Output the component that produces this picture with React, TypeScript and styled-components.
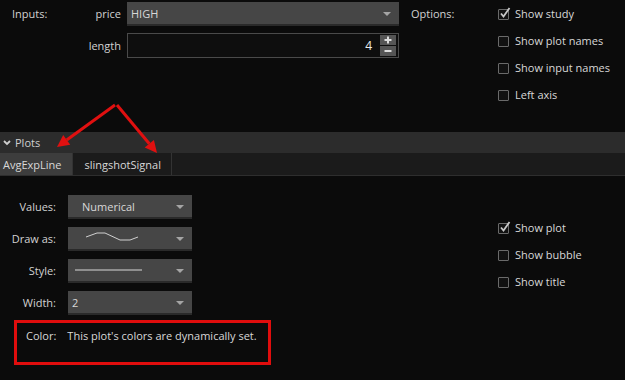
import React from 'react'
import styled, { createGlobalStyle } from 'styled-components'

const GlobalStyle = createGlobalStyle`
  html, body {
    margin: 0;
    padding: 0;
    background: #0b0b0b;
  }
  body {
    font-family: 'Open Sans', 'Liberation Sans', sans-serif;
    font-size: 11px;
    color: #d2d2d2;
  }
`

const Page = styled.div`
  position: relative;
  width: 625px;
  height: 380px;
  overflow: hidden;
  background: #0b0b0b;
`

const TopSection = styled.div`
  display: flex;
  height: 132px;
`

const InputsColumn = styled.div`
  display: grid;
  grid-template-columns: 70px 45px 272px;
  row-gap: 7px;
  padding: 2px 0 0 12px;
  align-content: start;
  align-items: center;
`

const SectionLabel = styled.div`
  color: #d2d2d2;
  height: 24px;
  line-height: 24px;
`

const FieldLabel = styled.div`
  text-align: right;
  padding-right: 6px;
  height: 24px;
  line-height: 24px;
`

const Select = styled.div<{ $width?: number }>`
  position: relative;
  display: flex;
  align-items: center;
  box-sizing: border-box;
  width: ${({ $width }) => ($width ? `${$width}px` : '100%')};
  height: 24px;
  padding: 0 22px 0 4px;
  background: #464646;
  border-bottom: 2px solid #2a2a2a;
  color: #d8d8d8;
`

const Caret = styled.span`
  position: absolute;
  right: 8px;
  top: 10px;
  width: 0;
  height: 0;
  border-left: 4px solid transparent;
  border-right: 4px solid transparent;
  border-top: 4px solid #a5a5a5;
`

const NumberInput = styled.div`
  display: flex;
  align-items: center;
  justify-content: flex-end;
  box-sizing: border-box;
  height: 25px;
  border: 1px solid #4a4a4a;
  background: #0e0e0e;
  padding-right: 2px;
  color: #ececec;
`

const NumberValue = styled.span`
  margin-right: 8px;
  font-size: 12px;
`

const Spinner = styled.div`
  display: flex;
  flex-direction: column;
  gap: 1px;
`

const SpinButton = styled.div`
  display: flex;
  align-items: center;
  justify-content: center;
  width: 16px;
  height: 10px;
  background: #555;
`

const OptionsColumn = styled.div`
  display: flex;
  padding: 2px 0 0 12px;
`

const OptionsLabel = styled(SectionLabel)`
  width: 87px;
`

const CheckList = styled.div<{ $gap: number }>`
  display: flex;
  flex-direction: column;
  gap: ${({ $gap }) => $gap}px;
`

const CheckRow = styled.div`
  display: flex;
  align-items: center;
  gap: 6px;
  height: 24px;
  line-height: 24px;
  color: #d8d8d8;
`

const Box = styled.span`
  position: relative;
  box-sizing: border-box;
  width: 11px;
  height: 11px;
  border: 1px solid #6a6a6a;
  border-radius: 1px;
  background: #111;
  margin-top: 1px;
`

const PlotsHeader = styled.div`
  display: flex;
  align-items: center;
  gap: 4px;
  height: 21px;
  padding-left: 3px;
  background: #2c2c2c;
  color: #cfcfcf;
`

const TabBar = styled.div`
  display: flex;
  height: 22px;
  background: #1b1b1b;
  border-bottom: 1px solid #2e2e2e;
`

const Tab = styled.div<{ $active?: boolean }>`
  display: flex;
  align-items: center;
  padding: ${({ $active }) => ($active ? '0 11px 0 3px' : '0 10px 0 11px')};
  background: ${({ $active }) => ($active ? '#3d3d3d' : 'transparent')};
  border-right: 1px solid #333;
  color: #d8d8d8;
  font-size: 11px;
`

const PlotBody = styled.div`
  display: flex;
  padding-top: 19px;
`

const PlotFields = styled.div`
  display: grid;
  grid-template-columns: 56px 124px;
  column-gap: 12px;
  row-gap: 8px;
  align-items: center;
  width: 498px;
  align-content: start;
`

const PlotLabel = styled.div`
  text-align: right;
  height: 24px;
  line-height: 24px;
`

const PlotChecks = styled.div`
  padding-top: 21px;
`

const ColorBox = styled.div`
  display: flex;
  gap: 11px;
  box-sizing: border-box;
  width: 257px;
  height: 45px;
  margin: 5px 0 0 14px;
  padding: 5px 0 0 9px;
  border: 3px solid #e00d0d;
  color: #d8d8d8;
  line-height: 16px;
`

const ArrowLayer = styled.svg`
  position: absolute;
  left: 0;
  top: 0;
  pointer-events: none;
`

const Check = ({ checked, label }: { checked?: boolean; label: string }) => (
  <CheckRow>
    <Box>
      {checked && (
        <svg width="12" height="12" viewBox="0 0 12 12" style={{ position: 'absolute', left: 0, top: -3 }}>
          <path d="M2 6.5 L4.5 9.5 L10.5 1" stroke="#c8c8c8" strokeWidth="1.8" fill="none" />
        </svg>
      )}
    </Box>
    {label}
  </CheckRow>
)

const Arrow = ({ x1, y1, x2, y2 }: { x1: number; y1: number; x2: number; y2: number }) => {
  const a = Math.atan2(y2 - y1, x2 - x1)
  const len = 12
  const w = 6
  const bx = x2 - len * Math.cos(a)
  const by = y2 - len * Math.sin(a)
  const px = -Math.sin(a) * w
  const py = Math.cos(a) * w
  return (
    <>
      <line x1={x1} y1={y1} x2={bx} y2={by} stroke="#e01010" strokeWidth="3" />
      <polygon points={`${x2},${y2} ${bx + px},${by + py} ${bx - px},${by - py}`} fill="#e01010" />
    </>
  )
}

export default function App() {
  return (
    <Page>
      <GlobalStyle />
      <TopSection>
        <InputsColumn>
          <SectionLabel>Inputs:</SectionLabel>
          <FieldLabel>price</FieldLabel>
          <Select>
            HIGH
            <Caret />
          </Select>
          <span />
          <FieldLabel>length</FieldLabel>
          <NumberInput>
            <NumberValue>4</NumberValue>
            <Spinner>
              <SpinButton>
                <svg width="8" height="8" viewBox="0 0 8 8">
                  <path d="M4 0.5 V7.5 M0.5 4 H7.5" stroke="#dcdcdc" strokeWidth="2" />
                </svg>
              </SpinButton>
              <SpinButton>
                <svg width="8" height="8" viewBox="0 0 8 8">
                  <path d="M0.5 4 H7.5" stroke="#dcdcdc" strokeWidth="2" />
                </svg>
              </SpinButton>
            </Spinner>
          </NumberInput>
        </InputsColumn>
        <OptionsColumn>
          <OptionsLabel>Options:</OptionsLabel>
          <CheckList $gap={3}>
            <Check checked label="Show study" />
            <Check label="Show plot names" />
            <Check label="Show input names" />
            <Check label="Left axis" />
          </CheckList>
        </OptionsColumn>
      </TopSection>

      <PlotsHeader>
        <svg width="8" height="6" viewBox="0 0 8 6">
          <path d="M1 1 L4 4 L7 1" stroke="#cfcfcf" strokeWidth="1.8" fill="none" />
        </svg>
        Plots
      </PlotsHeader>
      <TabBar>
        <Tab $active>AvgExpLine</Tab>
        <Tab>slingshotSignal</Tab>
      </TabBar>

      <PlotBody>
        <PlotFields>
          <PlotLabel>Values:</PlotLabel>
          <Select $width={124}>
            <span style={{ paddingLeft: 10 }}>Numerical</span>
            <Caret />
          </Select>
          <PlotLabel>Draw as:</PlotLabel>
          <Select $width={124}>
            <svg width="70" height="14" viewBox="0 0 70 14">
              <path d="M14 6 L25 2 L33 2 L48 9 L58 9 L66 6" stroke="#d0d0d0" strokeWidth="1" fill="none" />
            </svg>
            <Caret />
          </Select>
          <PlotLabel>Style:</PlotLabel>
          <Select $width={124}>
            <svg width="72" height="4" viewBox="0 0 72 4">
              <line x1="3" y1="2" x2="70" y2="2" stroke="#d8d8d8" strokeWidth="1" />
            </svg>
            <Caret />
          </Select>
          <PlotLabel>Width:</PlotLabel>
          <Select $width={124}>
            2
            <Caret />
          </Select>
        </PlotFields>
        <PlotChecks>
          <CheckList $gap={3}>
            <Check checked label="Show plot" />
            <Check label="Show bubble" />
            <Check label="Show title" />
          </CheckList>
        </PlotChecks>
      </PlotBody>

      <ColorBox>
        <span>Color:</span>
        <span>This plot's colors are dynamically set.</span>
      </ColorBox>

      <ArrowLayer width="625" height="380">
        <Arrow x1={115} y1={105} x2={57} y2={147} />
        <Arrow x1={117} y1={105} x2={157} y2={153} />
      </ArrowLayer>
    </Page>
  )
}
